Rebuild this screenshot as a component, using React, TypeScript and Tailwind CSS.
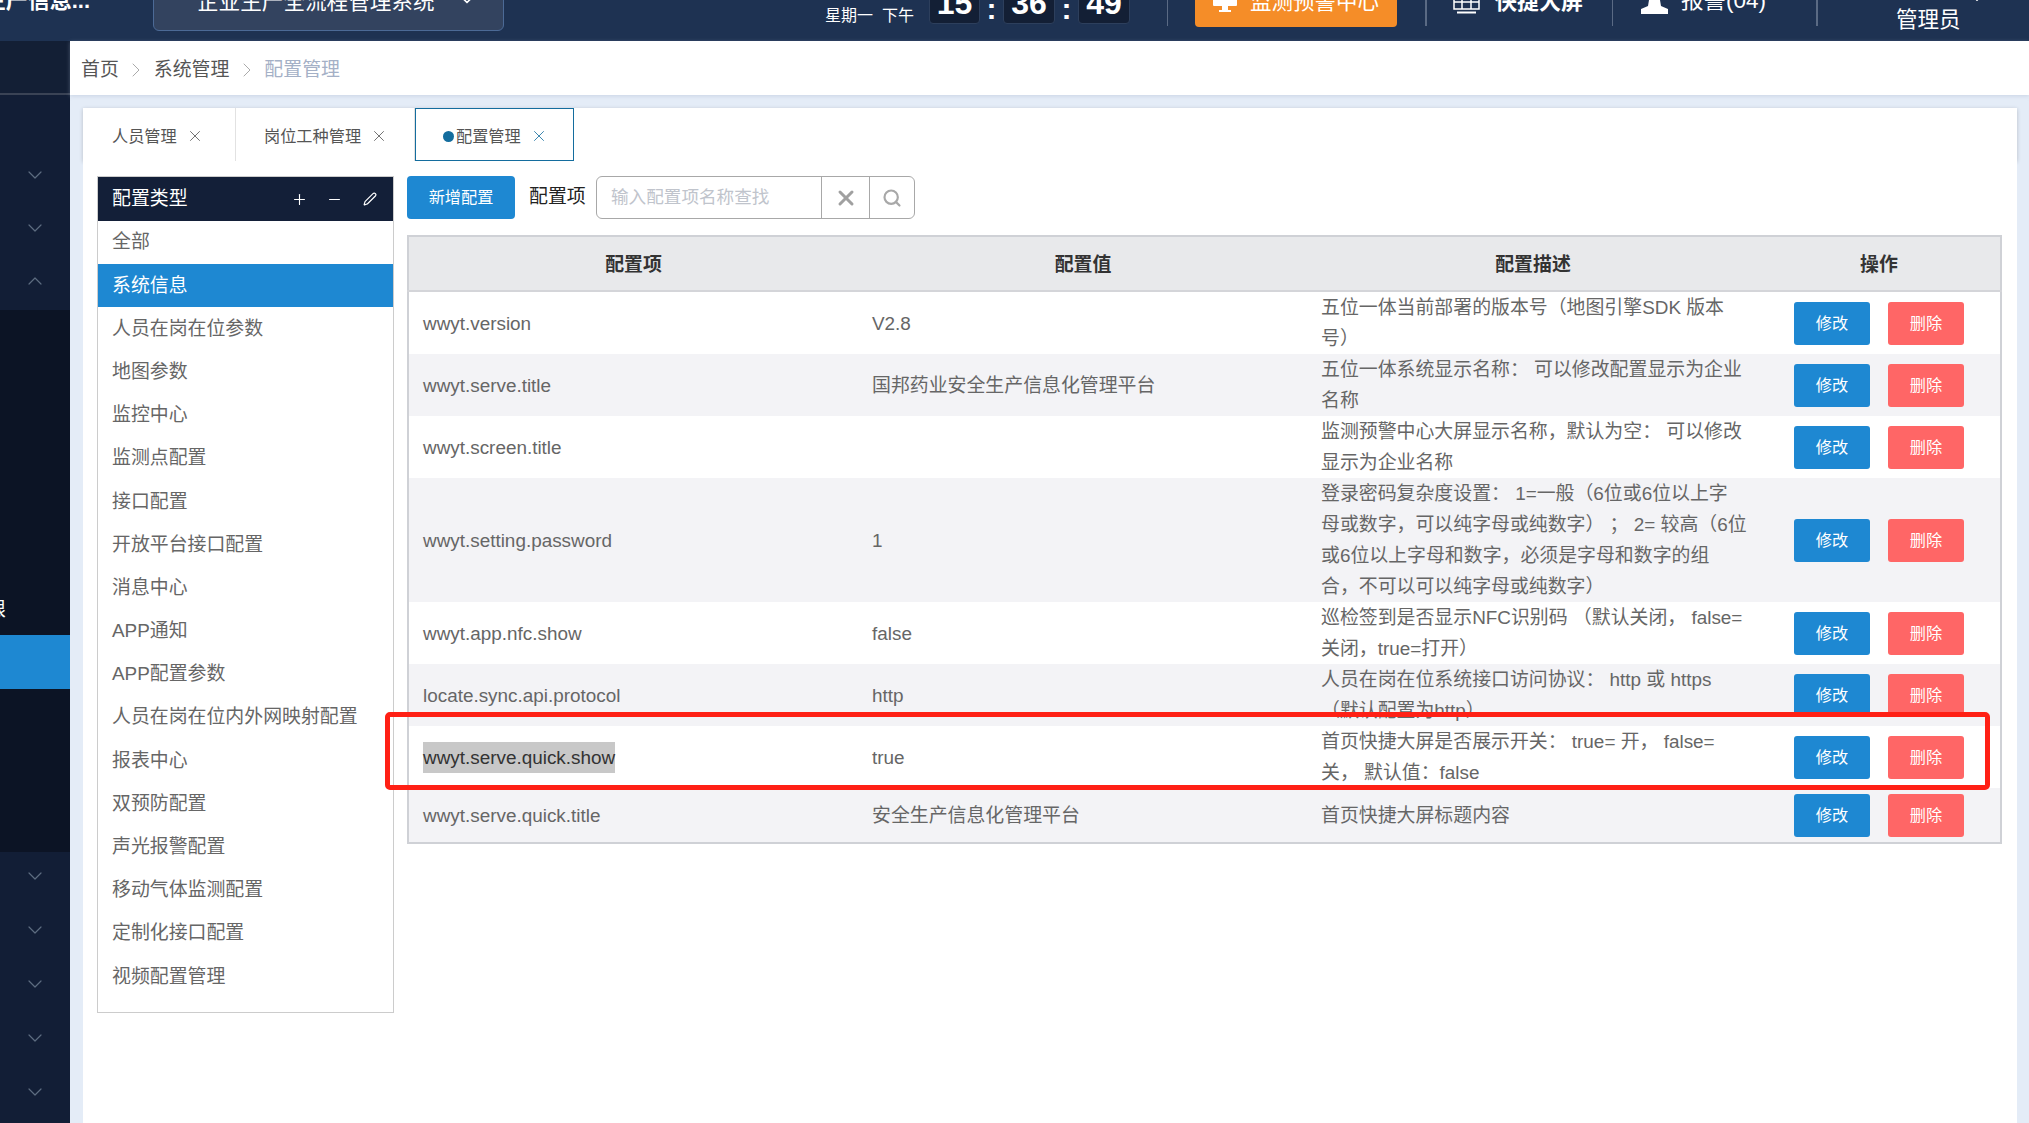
import { ChevronDown, ChevronRight, ChevronUp, Minus, Pen, Plus, Search, X } from "lucide-react";

const menuItems = [
	"全部",
	"系统信息",
	"人员在岗在位参数",
	"地图参数",
	"监控中心",
	"监测点配置",
	"接口配置",
	"开放平台接口配置",
	"消息中心",
	"APP通知",
	"APP配置参数",
	"人员在岗在位内外网映射配置",
	"报表中心",
	"双预防配置",
	"声光报警配置",
	"移动气体监测配置",
	"定制化接口配置",
	"视频配置管理",
];

const rows = [
	{ key: "wwyt.version", value: "V2.8", desc: ["五位一体当前部署的版本号（地图引擎SDK 版本", "号）"], h: "h-[62px]" },
	{ key: "wwyt.serve.title", value: "国邦药业安全生产信息化管理平台", desc: ["五位一体系统显示名称： 可以修改配置显示为企业", "名称"], h: "h-[62px]" },
	{ key: "wwyt.screen.title", value: "", desc: ["监测预警中心大屏显示名称，默认为空： 可以修改", "显示为企业名称"], h: "h-[62px]" },
	{
		key: "wwyt.setting.password",
		value: "1",
		desc: ["登录密码复杂度设置： 1=一般（6位或6位以上字", "母或数字，可以纯字母或纯数字）\u00a0；\u00a02= 较高（6位", "或6位以上字母和数字，必须是字母和数字的组", "合，不可以可以纯字母或纯数字）"],
		h: "h-[124px]",
	},
	{ key: "wwyt.app.nfc.show", value: "false", desc: ["巡检签到是否显示NFC识别码 （默认关闭， false=", "关闭，true=打开）"], h: "h-[62px]" },
	{ key: "locate.sync.api.protocol", value: "http", desc: ["人员在岗在位系统接口访问协议： http 或 https", "（默认配置为http）"], h: "h-[62px]" },
	{ key: "wwyt.serve.quick.show", value: "true", desc: ["首页快捷大屏是否展示开关： true= 开， false=", "关， 默认值：false"], h: "h-[62px]", selected: true },
	{ key: "wwyt.serve.quick.title", value: "安全生产信息化管理平台", desc: ["首页快捷大屏标题内容"], h: "h-[55px]" },
];

function Header() {
	return (
		<header className="-mt-[39px] flex h-[80px] shrink-0 items-start bg-[#1e3252] text-white">
			<div className="mt-[26px] flex w-[90px] justify-end overflow-hidden whitespace-nowrap text-[22px] leading-[28px] font-bold">
				安全生产信息...
			</div>
			<div className="mt-[10px] ml-[63px] flex h-[60px] w-[351px] items-center rounded-[6px] border border-[#4c6a96] bg-[#33435f] pt-[2px] pl-[43px] text-[21.6px]">
				<span>企业生产全流程管理系统</span>
				<ChevronDown size={20} className="ml-[22px] -translate-y-[2px]" />
			</div>
			<div className="mt-[43px] ml-[321px] w-[90px] text-[16px] leading-[24px] whitespace-nowrap">星期一&nbsp;&nbsp;下午</div>
			<div className="mt-[19px] ml-[14px] flex h-[44px] w-[51px] items-center justify-center rounded-[4px] border border-[#2d3f5c] bg-[#131f35] pt-[2px] text-[32px] font-bold">15</div>
			<div className="mt-[36px] flex w-[23px] justify-center text-[30px] leading-[24px] font-bold">:</div>
			<div className="mt-[19px] flex h-[44px] w-[52px] items-center justify-center rounded-[4px] border border-[#2d3f5c] bg-[#131f35] pt-[2px] text-[32px] font-bold">36</div>
			<div className="mt-[36px] flex w-[23px] justify-center text-[30px] leading-[24px] font-bold">:</div>
			<div className="mt-[19px] flex h-[44px] w-[52px] items-center justify-center rounded-[4px] border border-[#2d3f5c] bg-[#131f35] pt-[2px] text-[32px] font-bold">49</div>
			<div className="mt-[15px] ml-[37px] h-[50px] w-px bg-[#5a6a84]" />
			<div className="mt-[14px] ml-[27px] flex h-[52px] w-[202px] items-center rounded-[4px] bg-[#f58d28] pt-[2px] pl-[18px] text-[21.5px] whitespace-nowrap">
				<svg width="24" height="24" viewBox="0 0 24 24" fill="white">
					<rect x="0" y="0" width="24" height="16" rx="1" />
					<rect x="9" y="16" width="6" height="4" />
					<rect x="6" y="20" width="12" height="2" />
				</svg>
				<span className="ml-[13px]">监测预警中心</span>
			</div>
			<div className="mt-[15px] ml-[28px] h-[50px] w-[2px] bg-[#5a6a84]" />
			<svg width="27" height="26" viewBox="0 0 27 26" className="mt-[27px] ml-[26px]" fill="none" stroke="white" strokeWidth="1.5">
				<rect x="1" y="1" width="25" height="20" />
				<path d="M1 8h25M1 14h25M9 1v20M18 1v20" />
				<path d="M4 24.5h19" strokeWidth="2" />
			</svg>
			<div className="mt-[27px] ml-[15px] w-[90px] text-[22px] leading-[28px] font-bold whitespace-nowrap">快捷大屏</div>
			<div className="mt-[15px] ml-[27px] h-[50px] w-px bg-[#5a6a84]" />
			<svg width="27" height="26" viewBox="0 0 27 26" className="mt-[27px] ml-[28px]" fill="white">
				<circle cx="13.5" cy="6" r="7" />
				<path d="M8 12h11l1 6 7 3v5H0v-5l7-3z" />
			</svg>
			<div className="mt-[26px] ml-[13px] w-[88px] text-[22.5px] leading-[28px] whitespace-nowrap">报警(04)</div>
			<div className="mt-[15px] ml-[47px] h-[50px] w-[2px] bg-[#5a6a84]" />
			<div className="mt-[45px] ml-[78px] w-[64px] text-[21.5px] leading-[28px] whitespace-nowrap">管理员</div>
			<ChevronDown size={18} className="mt-[28px] ml-[8px]" />
		</header>
	);
}

function Sidebar() {
	return (
		<aside className="flex w-[70px] shrink-0 flex-col bg-[#121e36] text-[#5d6c80]">
			<div className="h-[54px] border-b-2 border-[#3a4355] bg-[#131f35]" />
			<div className="flex h-[215px] flex-col items-center pt-[53px]">
				<div className="flex h-[53px] items-center"><ChevronDown size={24} strokeWidth={1.2} /></div>
				<div className="flex h-[53px] items-center"><ChevronDown size={24} strokeWidth={1.2} /></div>
				<div className="flex h-[53px] items-center"><ChevronUp size={24} strokeWidth={1.2} /></div>
			</div>
			<div className="flex h-[542px] flex-col bg-[#0c1425]">
				<div className="mt-[280px] mb-[5px] flex h-[40px] w-[6px] items-center justify-end overflow-hidden text-[18.9px] whitespace-nowrap text-white">权限</div>
				<div className="h-[54px] bg-[#1e88d2]" />
			</div>
			<div className="flex flex-col items-center gap-[6px]">
				{[0, 1, 2, 3, 4].map((i) => (
					<div key={i} className="flex h-12 items-center"><ChevronDown size={24} strokeWidth={1.2} /></div>
				))}
			</div>
		</aside>
	);
}

function Tabs() {
	return (
		<div className="flex h-[53px] shrink-0 bg-white pl-px text-[16.2px] text-[#555] shadow-[0_1px_4px_rgba(0,0,0,0.2)]">
			<div className="flex w-[152px] items-center border-r border-[#e2e2e2] pt-[3px] pl-[28px]">
				<span>人员管理</span>
				<X size={18} strokeWidth={1.1} className="ml-[9px]" />
			</div>
			<div className="flex w-[179px] items-center border-r border-[#e2e2e2] pt-[3px] pl-[28px]">
				<span>岗位工种管理</span>
				<X size={18} strokeWidth={1.1} className="ml-[9px]" />
			</div>
			<div className="flex w-[159px] items-center border border-[#146d9e] pt-[3px] pl-[27px]">
				<span className="h-[11px] w-[11px] shrink-0 rounded-full bg-[#146d9e]" />
				<span className="ml-[2px]">配置管理</span>
				<X size={18} strokeWidth={1.1} className="ml-[9px] text-[#146d9e]" />
			</div>
		</div>
	);
}

function ConfigMenu() {
	return (
		<div className="h-[837px] w-[297px] shrink-0 border border-[#cccccc] pb-[14px]">
			<div className="flex h-[44px] items-center bg-[#131f38] pr-[16px] pl-[14px] text-white">
				<span className="flex-1">配置类型</span>
				<Plus size={17} strokeWidth={1.6} />
				<Minus size={17} strokeWidth={1.6} className="ml-[18px]" />
				<Pen size={14} strokeWidth={2} className="ml-[20px]" />
			</div>
			{menuItems.map((item) => (
				<div
					key={item}
					className={
						item === "系统信息"
							? "flex h-[43.2px] items-center bg-[#1e88d2] pl-[14px] text-white"
							: "flex h-[43.2px] items-center pl-[14px] text-[#666]"
					}
				>
					{item}
				</div>
			))}
		</div>
	);
}

function Toolbar() {
	return (
		<div className="flex h-[43px] items-center">
			<button className="h-[43px] w-[108px] rounded-[4px] bg-[#1e88d2] text-[16.2px] text-white">新增配置</button>
			<span className="ml-[14px] w-[67px] text-[#222]">配置项</span>
			<div className="flex h-[43px] w-[319px] overflow-hidden rounded-[6px] border border-[#a8a8a8]">
				<input
					placeholder="输入配置项名称查找"
					className="w-[224px] pl-[14px] text-[17.6px] outline-none placeholder:text-[#c0c4cc]"
				/>
				<div className="flex w-[48px] items-center justify-center border-l border-[#a8a8a8] text-[#a0a0a0]">
					<X size={24} strokeWidth={3} />
				</div>
				<div className="flex flex-1 items-center justify-center border-l border-[#a8a8a8] text-[#a8a8a8]">
					<Search size={20} strokeWidth={2.6} />
				</div>
			</div>
		</div>
	);
}

function ConfigTable() {
	return (
		<table className="mt-[16px] w-[1595px] table-fixed border-collapse border-2 border-[#cfd1d6] text-[#666]">
			<colgroup>
				<col className="w-[450px]" />
				<col className="w-[450px]" />
				<col className="w-[450px]" />
				<col />
			</colgroup>
			<thead>
				<tr className="h-[55px] border-b-2 border-[#d4d5d9] bg-[#e8e9eb] font-bold text-[#333]">
					<th className="pt-[4px]">配置项</th>
					<th className="pt-[4px]">配置值</th>
					<th className="pt-[4px]">配置描述</th>
					<th className="pt-[4px]">操作</th>
				</tr>
			</thead>
			<tbody>
				{rows.map((row) => (
					<tr key={row.key} className={`${row.h} even:bg-[#f3f3f6]`}>
						<td className="pl-[14px] leading-[31px]">
							{row.selected ? <span className="inline-block bg-[#c8c8c8] text-[#333]">{row.key}</span> : row.key}
						</td>
						<td className="pl-[14px] leading-[31px]">{row.value}</td>
						<td className="pl-[13px] leading-[31px] whitespace-nowrap">
							{row.desc.map((line) => (
								<div key={line}>{line}</div>
							))}
						</td>
						<td className="pl-[36px]">
							<div className="flex gap-[18px] text-[16.2px] text-white">
								<button className="h-[43px] w-[76px] rounded-[3px] bg-[#1e88d2]">修改</button>
								<button className="h-[43px] w-[76px] rounded-[3px] bg-[#ff6666]">删除</button>
							</div>
						</td>
					</tr>
				))}
			</tbody>
		</table>
	);
}

export default function App() {
	return (
		<div className="relative flex h-[1123px] w-[2029px] flex-col overflow-hidden bg-[#e4ecf7] font-['Liberation_Sans','Noto_Sans_CJK_SC',sans-serif] text-[18.9px]">
			<Header />
			<div className="flex flex-1">
				<Sidebar />
				<main className="flex flex-1 flex-col">
					<div className="flex h-[54px] shrink-0 items-center bg-white pt-[4px] pl-[11px] text-[#555] shadow-[0_1px_4px_rgba(160,175,200,0.4)]">
						<span>首页</span>
						<ChevronRight size={24} strokeWidth={1} className="mr-[6px] ml-[5px] text-[#aaa]" />
						<span>系统管理</span>
						<ChevronRight size={24} strokeWidth={1} className="mr-[5px] ml-[6px] text-[#aaa]" />
						<span className="text-[#a4b0c6]">配置管理</span>
					</div>
					<div className="mt-[13px] mr-[12px] ml-[13px] flex flex-1 flex-col">
						<Tabs />
						<div className="flex flex-1 gap-[13px] bg-white pt-[15px] pl-[14px]">
							<ConfigMenu />
							<div>
								<Toolbar />
								<ConfigTable />
							</div>
						</div>
					</div>
				</main>
			</div>
			{/* red annotation drawn on the screenshot */}
			<div className="absolute top-[712px] left-[385px] h-[78px] w-[1605px] rounded-[5px] border-[5px] border-[#ff2015]" />
		</div>
	);
}
